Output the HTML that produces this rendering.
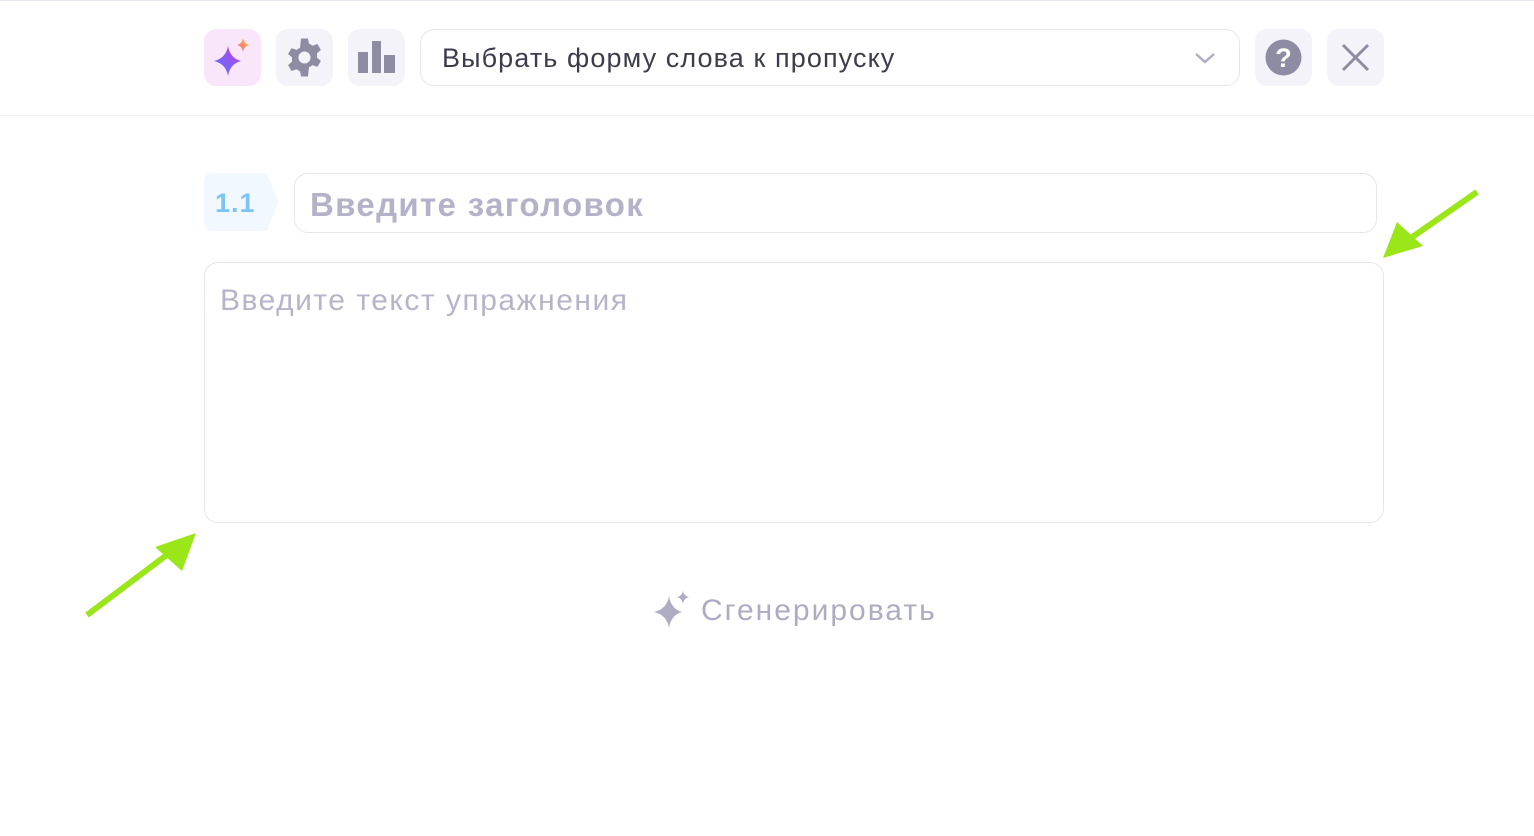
<!DOCTYPE html>
<html><head><meta charset="utf-8"><style>
body{margin:0;width:1534px;height:836px;background:#fff;font-family:"Liberation Sans",sans-serif;position:relative;overflow:hidden}
.top{position:absolute;left:0;top:0;width:1534px;height:1px;background:#e6e6f5}
.hl{position:absolute;left:0;top:115px;width:1534px;height:1px;background:#f1f1f5}
.b{position:absolute;top:29px;width:57px;height:57px;border-radius:12px;background:#f4f3f9}
.b svg{position:absolute;left:0;top:0}
.sel{position:absolute;left:420px;top:29px;width:820px;height:57px;border:1px solid #e6e5ee;border-radius:14px;box-sizing:border-box}
.sel span{position:absolute;left:21px;top:13px;font-size:27px;letter-spacing:1.1px;color:#3c3c4c}
.num{position:absolute;left:204px;top:173px;width:60px;height:58px;background:#f1f8ff;border-radius:8px 0 0 8px}
.num span{position:absolute;left:11px;top:15px;font-size:27px;font-weight:bold;color:#7cc3f6;letter-spacing:1px}
.ti{position:absolute;left:294px;top:173px;width:1083px;height:60px;border:1px solid #e6e5ee;border-radius:14px;box-sizing:border-box}
.ti span{position:absolute;left:15px;top:12px;font-size:33px;font-weight:bold;color:#b4b2c8;letter-spacing:1.35px}
.ta{position:absolute;left:204px;top:262px;width:1180px;height:261px;border:1px solid #e6e5ee;border-radius:14px;box-sizing:border-box}
.ta span{position:absolute;left:15px;top:21px;font-size:30px;letter-spacing:1.5px;color:#b6b4c9}
.gen{position:absolute;left:701px;top:594px;font-size:30px;letter-spacing:2px;color:#aeacc3}
</style></head><body>
<div class="top"></div>
<div class="b" style="left:204px;background:#fae6fb"><svg width="57" height="57" viewBox="0 0 57 57"><defs><linearGradient id="g" x1="0" y1="1" x2="1" y2="0"><stop offset="0" stop-color="#4f7cff"/><stop offset="1" stop-color="#c43be0"/></linearGradient><linearGradient id="o" x1="0" y1="1" x2="1" y2="0"><stop offset="0" stop-color="#f0609a"/><stop offset="1" stop-color="#ffc02a"/></linearGradient></defs><path d="M24 17 Q26 29 37 32 Q26 35 24 47 Q22 35 10 32 Q22 29 24 17Z" fill="url(#g)"/><path d="M39 9 Q40 15 45 16 Q40 17 39 23 Q38 17 33 16 Q38 15 39 9Z" fill="url(#o)"/></svg></div>
<div class="b" style="left:276px"><svg width="57" height="57" viewBox="-4.5 -4.5 33 33"><path fill="#8e8ca3" d="M10 1h4l.6 3a8 8 0 0 1 2 1.2l2.9-1 2 3.4-2.3 2a8 8 0 0 1 0 2.4l2.3 2-2 3.4-2.9-1a8 8 0 0 1-2 1.2L14 23h-4l-.6-3a8 8 0 0 1-2-1.2l-2.9 1-2-3.4 2.3-2a8 8 0 0 1 0-2.4l-2.3-2 2-3.4 2.9 1a8 8 0 0 1 2-1.2z M12 8.5a3.5 3.5 0 1 0 0 7 3.5 3.5 0 1 0 0-7z" fill-rule="evenodd"/></svg></div>
<div class="b" style="left:348px"><svg width="57" height="57"><rect x="10" y="23" width="10" height="21" fill="#8e8ca3"/><rect x="24" y="12" width="9" height="32" fill="#8e8ca3"/><rect x="36" y="26" width="11" height="18" fill="#8e8ca3"/></svg></div>
<div class="sel"><span>Выбрать форму слова к пропуску</span><svg style="position:absolute;left:772px;top:20px" width="24" height="16" viewBox="0 0 24 16"><path d="M3 4l9 8 9-8" stroke="#b0aec4" stroke-width="2.5" fill="none"/></svg></div>
<div class="b" style="left:1255px"><svg width="57" height="57"><circle cx="28.5" cy="28.5" r="18" fill="#8e8ca3"/><text x="28.5" y="38" text-anchor="middle" font-family="Liberation Sans" font-weight="bold" font-size="27" fill="#fff">?</text></svg></div>
<div class="b" style="left:1327px"><svg width="57" height="57"><path d="M16 16L41 41M41 16L16 41" stroke="#8e8ca3" stroke-width="3"/></svg></div>
<div class="hl"></div>
<div class="num"><span>1.1</span></div>
<svg style="position:absolute;left:263px;top:173px" width="16" height="58"><path d="M0 0L4 0L15 29L4 58L0 58Z" fill="#f1f8ff"/></svg>
<div class="ti"><span>Введите заголовок</span></div>
<div class="ta"><span>Введите текст упражнения</span></div>
<svg style="position:absolute;left:652px;top:590px" width="40" height="40" viewBox="0 0 40 40"><path d="M17 6 Q19 19 30 22 Q19 25 17 38 Q15 25 2 22 Q15 19 17 6Z" fill="#aeacc3"/><path d="M31 1 Q32 6 37 7 Q32 8 31 14 Q30 8 25 7 Q30 6 31 1Z" fill="#aeacc3"/></svg>
<div class="gen">Сгенерировать</div>
<svg style="position:absolute;left:0;top:0" width="1534" height="836"><g stroke="#9ae619" stroke-width="6" fill="#9ae619"><line x1="1477" y1="192" x2="1408" y2="240"/><path d="M1383 258L1397 222L1423 246Z" stroke="none"/><line x1="87" y1="615" x2="172" y2="551"/><path d="M196 533L182 571L155 547Z" stroke="none"/></g></svg>
</body></html>
